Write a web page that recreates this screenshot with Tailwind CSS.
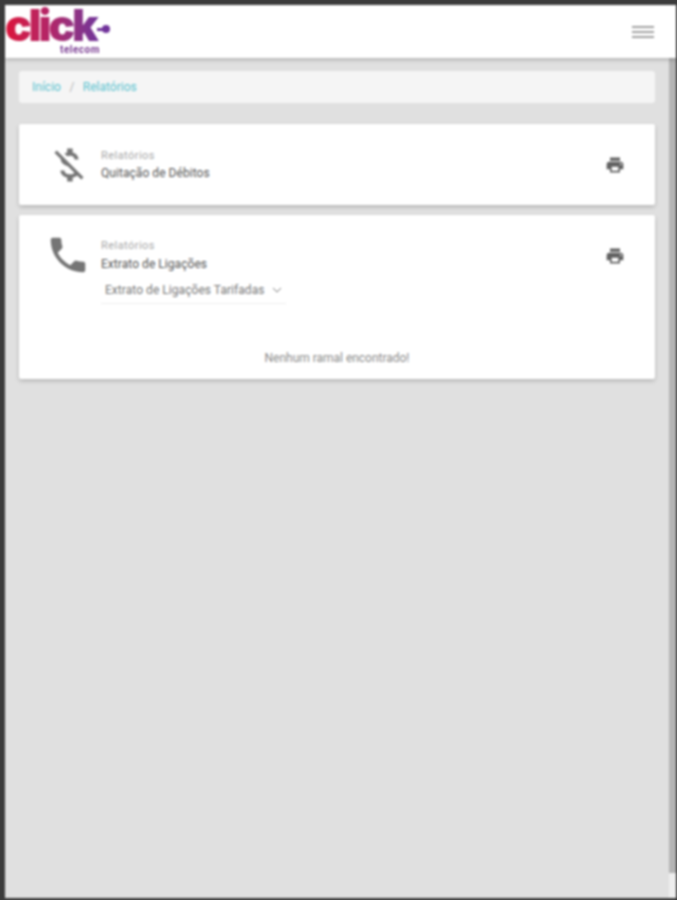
<!DOCTYPE html>
<html lang="pt-BR">
<head>
    <meta charset="UTF-8">
    <meta name="viewport" content="width=device-width, initial-scale=1.0">
    <title>Relatórios</title>
    <script src="https://cdn.jsdelivr.net/npm/@tailwindcss/browser@4"></script>
</head>
<body class="h-[900px] overflow-hidden bg-[#3c3c3c] font-['Roboto','Liberation_Sans',sans-serif]">
    <div class="flex flex-col h-[893px] mt-[5px] ml-[5px] mr-[1px] bg-[#e0e0e0] blur-[0.8px]">
        <!-- topo -->
        <header class="relative z-10 h-[53px] shrink-0 flex items-center justify-between bg-white shadow-[0_2px_4px_rgba(0,0,0,0.2)] pr-[22px]">
            <div class="w-[112px] h-[53px] pt-[1px]">
                <div class="flex items-center h-[39px]">
                    <span class="pr-[3px] text-[44px] leading-[39px] font-black tracking-[-3px] font-['Inter','Liberation_Sans',sans-serif] text-transparent bg-clip-text bg-gradient-to-r from-[#dc1138] via-[#b0256a] to-[#70329a]">click</span>
                    <span class="w-[6px] h-[3px] ml-[-2px] mt-[7px] bg-[#70329a]"></span>
                    <span class="w-[8px] h-[8px] ml-[-1px] mt-[7px] rounded-full bg-[#70329a]"></span>
                </div>
                <p class="pl-[55px] text-[10px] leading-[9px] font-bold tracking-[0.5px] text-[#76368f]">telecom</p>
            </div>
            <div class="flex flex-col gap-[3px] w-[22px]">
                <span class="h-[2px] bg-[#a0a0a0]"></span>
                <span class="h-[2px] bg-[#a0a0a0]"></span>
                <span class="h-[2px] bg-[#a0a0a0]"></span>
            </div>
        </header>

        <div class="flex flex-1 min-h-0">
            <main class="flex-1 min-w-0 px-[14px] pt-[13px]">
                <!-- breadcrumb -->
                <nav class="h-[32px] flex items-center gap-[8.5px] px-[13px] rounded-[3px] bg-[#f5f5f5] text-[12px] text-[#5cc3d0]">
                    <span>Início</span>
                    <span class="text-[#b5b5b5]">/</span>
                    <span>Relatórios</span>
                </nav>

                <!-- quitação -->
                <section class="mt-[21px] h-[81px] flex bg-white rounded-[2px] shadow-[0_2px_4px_rgba(0,0,0,0.2)]">
                    <div class="w-[82px] shrink-0 flex justify-center pt-[19px] pl-[17px]">
                        <svg class="w-[44px] h-[44px] fill-[#757575]" viewBox="0 0 24 24"><path d="M12.5 6.9c1.78 0 2.44.85 2.5 2.1h2.21c-.07-1.72-1.12-3.3-3.21-3.81V3h-3v2.16c-.53.12-1.03.3-1.48.54l1.47 1.47c.41-.17.91-.27 1.51-.27zM5.33 4.06L4.06 5.33 7.5 8.77c0 2.08 1.56 3.21 3.91 3.91l3.51 3.51c-.34.48-1.05.91-2.42.91-2.06 0-2.87-.92-2.98-2.1h-2.2c.12 2.19 1.76 3.42 3.68 3.83V21h3v-2.15c.96-.18 1.83-.55 2.45-1.12l2.22 2.22 1.27-1.27L5.33 4.06z"/></svg>
                    </div>
                    <div class="flex-1 pt-[25px]">
                        <p class="text-[11px] leading-[14px] tracking-[0.45px] text-[#a6a6a6]">Relatórios</p>
                        <p class="mt-[2px] text-[12px] leading-[16px] tracking-[0.05px] text-[#555555]">Quitação de Débitos</p>
                    </div>
                    <div class="w-[50px] shrink-0 pt-[31px]">
                        <svg class="w-[20px] h-[20px] fill-[#616161]" viewBox="0 0 24 24"><path d="M19 8H5c-1.66 0-3 1.34-3 3v6h4v4h12v-4h4v-6c0-1.66-1.34-3-3-3zm-3 11H8v-5h8v5zm3-7c-.55 0-1-.45-1-1s.45-1 1-1 1 .45 1 1-.45 1-1 1zm-1-9H6v4h12V3z"/></svg>
                    </div>
                </section>

                <!-- extrato -->
                <section class="mt-[10px] h-[164px] bg-white rounded-[2px] shadow-[0_2px_4px_rgba(0,0,0,0.2)]">
                    <div class="flex">
                        <div class="w-[82px] shrink-0 flex justify-center pt-[17px] pl-[15px]">
                            <svg class="w-[46px] h-[46px] fill-[#757575]" viewBox="0 0 24 24"><path d="M6.62 10.79c1.44 2.83 3.76 5.14 6.59 6.59l2.2-2.2c.27-.27.67-.36 1.02-.24 1.12.37 2.33.57 3.57.57.55 0 1 .45 1 1V20c0 .55-.45 1-1 1-9.39 0-17-7.61-17-17 0-.55.45-1 1-1h3.5c.55 0 1 .45 1 1 0 1.25.2 2.45.57 3.57.11.35.03.74-.25 1.02l-2.2 2.2z"/></svg>
                        </div>
                        <div class="flex-1 pt-[24px]">
                            <p class="text-[11px] leading-[14px] tracking-[0.45px] text-[#a6a6a6]">Relatórios</p>
                            <p class="mt-[3px] text-[12px] leading-[16px] tracking-[0.05px] text-[#555555]">Extrato de Ligações</p>
                            <div class="mt-[5px] w-[185px] h-[27px] flex items-center justify-between pl-[4px] pr-[4px] border-b border-[#eeeeee] text-[12px] tracking-[0.05px] text-[#777777]">
                                <span>Extrato de Ligações Tarifadas</span>
                                <svg class="w-[10px] h-[10px] stroke-[#777777] fill-none" viewBox="0 0 10 10"><path d="M1 3l4 4 4-4" stroke-width="1"/></svg>
                            </div>
                        </div>
                        <div class="w-[50px] shrink-0 pt-[31px]">
                            <svg class="w-[20px] h-[20px] fill-[#616161]" viewBox="0 0 24 24"><path d="M19 8H5c-1.66 0-3 1.34-3 3v6h4v4h12v-4h4v-6c0-1.66-1.34-3-3-3zm-3 11H8v-5h8v5zm3-7c-.55 0-1-.45-1-1s.45-1 1-1 1 .45 1 1-.45 1-1 1zm-1-9H6v4h12V3z"/></svg>
                        </div>
                    </div>
                    <p class="mt-[45px] text-center text-[12px] tracking-[-0.02px] text-[#8a8a8a]">Nenhum ramal encontrado!</p>
                </section>
            </main>
            <!-- barra de rolagem -->
            <div class="w-[7px] shrink-0 bg-[#eeeeee]">
                <div class="h-[815px] bg-[#b4b4b4]"></div>
            </div>
        </div>
    </div>
</body>
</html>
